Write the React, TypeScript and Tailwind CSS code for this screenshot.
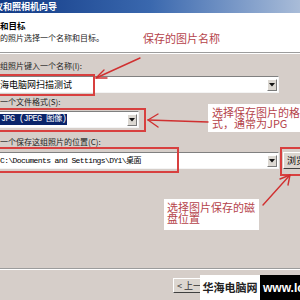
import React from "react";

const cjk = { fontFamily: '"Noto Sans CJK SC", "Noto Sans", sans-serif' };

function Combo({ width, children }: { width: string; children: React.ReactNode }) {
  return (
    <div
      className={`${width} shrink-0 -ml-[2px] h-[17px] flex items-center bg-white border border-t-[#808080] border-l-[#808080] border-b-[#f4f4f4] border-r-[#f4f4f4]`}
    >
      <div className="flex-1 min-w-0 h-full flex items-center overflow-hidden">{children}</div>
      <div className="w-[10px] h-[12px] mr-[1px] flex items-center justify-center bg-[#dcd8d2] border border-t-white border-l-white border-b-[#7a7a7a] border-r-[#7a7a7a]">
        <svg width="6" height="4" viewBox="0 0 6 4">
          <path d="M0 0h6L3 3.5z" fill="#111" />
        </svg>
      </div>
    </div>
  );
}

export default function App() {
  return (
    <div className="relative w-[300px] h-[300px] overflow-hidden bg-[#d6cec9] flex flex-col" style={cjk}>
      {/* Title bar */}
      <div className="h-[13px] shrink-0 bg-gradient-to-r from-[#123a86] via-[#3a68ae] to-[#a9bcd8] flex items-center">
        <span className="-ml-[6px] text-[9px] leading-none font-bold text-white whitespace-nowrap">仪和照相机向导</span>
      </div>

      {/* Header */}
      <div className="h-[40px] shrink-0 bg-white flex flex-col pt-[7px] gap-[2px] border-b border-[#9c9c9c]">
        <span className="text-[8.5px] leading-[10px] font-bold text-black whitespace-nowrap">和目标</span>
        <div className="flex items-center">
          <span className="text-[8px] leading-[10px] text-[#222] whitespace-nowrap w-[143px]">的照片选择一个名称和目标。</span>
          <span className="text-[11px] leading-[12px] text-[#b5434a] whitespace-nowrap">保存的图片名称</span>
        </div>
      </div>
      <div className="h-px shrink-0 bg-white" />

      {/* Body */}
      <div className="flex-1 flex flex-col pt-[7px]">
        <span className="text-[8px] leading-[10px] text-[#222] whitespace-nowrap">组照片键入一个名称(I):</span>
        <div className="mt-[5px]">
          <Combo width="w-[281px]">
            <span className="pl-[1px] text-[9px] leading-none text-black whitespace-nowrap">海电脑网扫描测试</span>
          </Combo>
        </div>
        <span className="mt-[4px] text-[8px] leading-[10px] text-[#222] whitespace-nowrap">一个文件格式(S):</span>
        <div className="mt-[4px]">
          <Combo width="w-[141px]">
            <span className="ml-[1px] px-[1px] bg-[#0a246a] text-white text-[8.5px] leading-[11px] whitespace-nowrap" style={{ fontFamily: '"Liberation Mono", "Noto Sans CJK SC", monospace', letterSpacing: "-0.6px" }}>
              JPG (JPEG 图像)
            </span>
          </Combo>
        </div>
        <span className="mt-[9px] text-[8px] leading-[10px] text-[#222] whitespace-nowrap">一个保存这组照片的位置(C):</span>
        <div className="mt-[5px] flex items-center">
          <Combo width="w-[281px]">
            <span className="pl-[1px] text-[8px] leading-none text-black whitespace-nowrap" style={{ fontFamily: '"Liberation Mono", "Noto Sans CJK SC", monospace', letterSpacing: "-0.6px" }}>
              C:\Documents and Settings\DY1\桌面
            </span>
          </Combo>
          <div className="ml-[4px] h-[17px] w-[60px] shrink-0 flex items-center pl-[3px] bg-[#dcd6d0] border border-t-white border-l-white border-b-[#404040] border-r-[#404040]">
            <span className="text-[9px] leading-none text-black whitespace-nowrap">浏览(R)...</span>
          </div>
        </div>

        <div className="flex-1" />
        <div className="h-px bg-[#9c9c9c]" />
        <div className="h-px bg-white" />
        <div className="h-[30px] flex items-start pt-[8px] pl-[173px]">
          <div className="h-[15px] w-[40px] flex items-center pl-[3px] bg-[#dcd6d0] border border-t-white border-l-white border-b-[#404040] border-r-[#404040]">
            <span className="text-[9px] leading-none text-[#333] whitespace-nowrap">&lt; 上一步(B)</span>
          </div>
        </div>
      </div>

      {/* Red annotation boxes */}
      <div className="absolute left-[-2px] top-[74px] w-[97px] h-[22px] border-2 border-[#d8403f]" />
      <div className="absolute left-[-2px] top-[108px] w-[148px] h-[24px] border-2 border-[#d8403f]" />
      <div className="absolute left-[-2px] top-[147px] w-[181px] h-[26px] border-2 border-[#d8403f]" />
      <div className="absolute left-[280px] top-[147px] w-[26px] h-[29px] border-2 border-[#d8403f]" />

      {/* Callouts */}
      <div className="absolute left-[208px] top-[104px] w-[95px] h-[28px] bg-white pl-[4px] pt-[3px] flex flex-col">
        <span className="text-[11px] leading-[11px] text-[#b5434a] whitespace-nowrap">选择保存图片的格</span>
        <span className="text-[11px] leading-[11px] text-[#b5434a] whitespace-nowrap">式，通常为JPG</span>
      </div>
      <div className="absolute left-[164px] top-[199px] w-[95px] h-[31px] bg-white pl-[3px] pt-[3px] flex flex-col">
        <span className="text-[11px] leading-[11px] text-[#b5434a] whitespace-nowrap">选择图片保存的磁</span>
        <span className="text-[11px] leading-[11px] text-[#b5434a] whitespace-nowrap">盘位置</span>
      </div>

      {/* Arrows */}
      <svg className="absolute left-0 top-0 pointer-events-none" width="300" height="300" viewBox="0 0 300 300">
        <g stroke="#d03030" strokeWidth="1.4" fill="none" strokeLinecap="round">
          <path d="M140 58 L96 78" />
          <path d="M96 78 L104 70 M96 78 L107 78" />
          <path d="M148 120 L208 122" />
          <path d="M148 120 L158 114 M148 120 L158 127" />
          <path d="M263 205 L290 175" />
          <path d="M290 175 L280 179 M290 175 L288 185" />
        </g>
      </svg>

      {/* Watermark */}
      <div className="absolute left-[200px] top-[275px] h-[25px] flex">
        <div className="w-[60px] h-full bg-white flex items-center justify-center">
          <span className="text-[11px] leading-none font-bold text-[#222] whitespace-nowrap">华海电脑网</span>
        </div>
        <div className="w-[45px] h-full bg-black flex items-center pl-[3px]">
          <span className="text-[12px] leading-none font-bold text-white whitespace-nowrap" style={{ fontFamily: '"Liberation Sans", Arial, sans-serif' }}>www.lo</span>
        </div>
      </div>
    </div>
  );
}
